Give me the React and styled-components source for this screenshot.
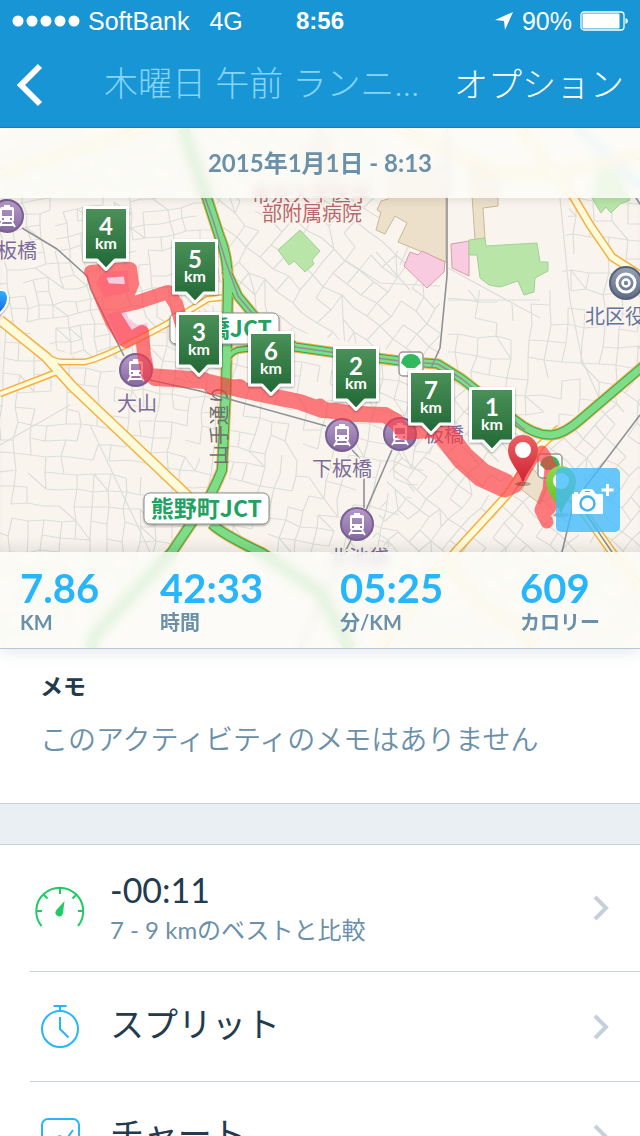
import React from 'react';
import styled, { createGlobalStyle } from 'styled-components';

const latin = "Lato, 'Noto Sans CJK JP', sans-serif";
const japanese = "'Noto Sans CJK JP', sans-serif";

const GlobalStyle = createGlobalStyle`
  * {
    box-sizing: border-box;
  }

  body {
    margin: 0;
    background: #fff;
    font-family: ${latin};
    color: #223b50;
  }

  button {
    margin: 0;
    padding: 0;
    border: 0;
    background: none;
    font: inherit;
    color: inherit;
    cursor: pointer;
  }
`;

const Screen = styled.div`
  height: 100vh;
  display: flex;
  flex-direction: column;
  overflow: hidden;
`;

const Header = styled.header`
  flex: none;
  background: #1895d4;
  color: #fff;
  border-bottom: 1px solid #1580b8;
`;

const StatusBar = styled.div`
  display: grid;
  grid-template-columns: 1fr auto 1fr;
  align-items: center;
  height: 42px;
  padding: 0 12px;
  font-family: 'Liberation Sans', sans-serif;
  font-size: 25px;
`;

const Clock = styled.strong`
  font-size: 24px;
`;

const StatusGroup = styled.div`
  display: flex;
  align-items: center;
  justify-content: ${({ $end }) => ($end ? 'flex-end' : 'flex-start')};
  gap: 8px;
`;

const Network = styled.span`
  margin-left: 12px;
`;

const NavBar = styled.nav`
  display: flex;
  align-items: center;
  height: 85px;
  padding: 0 16px;
  font-family: ${japanese};
  font-size: 34px;
  font-weight: 300;
  line-height: 48px;
`;

const BackButton = styled.button`
  display: flex;
  width: 88px;
`;

const Title = styled.h1`
  flex: 1;
  margin: 0 0 4px;
  overflow: hidden;
  white-space: nowrap;
  font-family: ${latin};
  font-size: 34px;
  font-weight: 300;
  color: #84d4fc;
`;

const OptionsButton = styled.button`
  margin-bottom: 4px;
  white-space: nowrap;
`;

const Content = styled.main`
  flex: 1;
  overflow-y: auto;
  scrollbar-width: none;
`;

const MapPanel = styled.section`
  position: relative;
  border-bottom: 1px solid #b9c8d8;
  box-shadow: 0 4px 14px rgba(60, 80, 100, 0.12);
`;

const MapDrawing = styled.svg`
  position: absolute;
  width: 100%;
  height: 100%;
  background: #f9f5ee;
  font-family: ${japanese};
`;

const MapOverlay = styled.div`
  position: relative;
  display: flex;
  flex-direction: column;
`;

const DateBar = styled.div`
  padding: 20px 0;
  background: rgba(253, 252, 249, 0.8);
  backdrop-filter: blur(5px);
  text-align: center;
  font-size: 24px;
  font-weight: 700;
  line-height: 30px;
  color: #6b90a9;
`;

const MapWindow = styled.div`
  display: flex;
  align-items: flex-end;
  justify-content: flex-end;
  height: 354px;
  padding: 20px;
  box-shadow: inset 0 8px 12px -8px rgba(0, 0, 0, 0.14), inset 0 -14px 14px -10px rgba(0, 0, 0, 0.1);
`;

const CameraButton = styled.button`
  display: flex;
  border-radius: 5px;
  background: rgba(66, 188, 253, 0.8);
`;

const Stats = styled.dl`
  display: grid;
  grid-template-columns: 7fr 9fr 9fr 6fr;
  margin: 0;
  padding: 14px 0 14px 20px;
  background: rgba(253, 252, 249, 0.8);
  backdrop-filter: blur(5px);
`;

const Stat = styled.div`
  display: flex;
  flex-direction: column-reverse;
`;

const StatValue = styled.dd`
  margin: 0;
  font-size: 40px;
  font-weight: 700;
  line-height: 44px;
  color: #27b5fb;
`;

const StatLabel = styled.dt`
  font-size: 20px;
  font-weight: 700;
  line-height: 24px;
  height: 24px;
  color: #6b90a9;
`;

const Memo = styled.section`
  padding: 20px 40px 46px;
`;

const MemoTitle = styled.h2`
  margin: 0 0 16px;
  font-size: 23px;
  font-weight: 700;
  line-height: 34px;
`;

const MemoText = styled.p`
  margin: 0;
  font-family: ${japanese};
  font-size: 28px;
  font-weight: 350;
  line-height: 38px;
  color: #6b90a9;
`;

const Divider = styled.div`
  height: 42px;
  border: solid #c6d0da;
  border-width: 1px 0;
  background: #eaeff3;
`;

const Menu = styled.ul`
  margin: 0;
  padding: 0 0 0 30px;
  list-style: none;
`;

const MenuItem = styled.li`
  border-bottom: 1px solid #c6d2dc;
`;

const MenuButton = styled.button`
  display: flex;
  align-items: center;
  width: 100%;
  min-height: ${({ $tall }) => ($tall ? '126px' : '109px')};
  padding-right: 30px;
  gap: 20px;
  text-align: left;
`;

const MenuText = styled.span`
  flex: 1;
  display: flex;
  flex-direction: column;
  padding-bottom: ${({ $single }) => ($single ? '6px' : '0')};
`;

const MenuTitle = styled.span`
  font-size: 34px;
  line-height: 44px;
`;

const MenuNote = styled.span`
  font-size: 24px;
  line-height: 36px;
  color: #6b90a9;
`;

// Streets: a jittered lattice per district, clipped to the district's outline
const districts = [
  { outline: '0,128 205,128 226,290 222,300 85,362 0,318', angle: -8, size: 13, seed: 3 },
  { outline: '0,318 60,370 215,515 222,300 85,362', angle: 6, size: 15, seed: 11 },
  { outline: '0,325 50,362 205,515 130,600 0,648', angle: 3, size: 16, seed: 7 },
  { outline: '205,128 378,128 380,230 440,300 440,360 262,325 228,270', angle: 38, size: 17, seed: 5 },
  { outline: '448,290 560,290 570,198 640,198 640,370 545,435 448,365', angle: 4, size: 18, seed: 9 },
  { outline: '228,350 400,362 440,430 350,648 230,540', angle: 12, size: 16, seed: 21 },
  { outline: '440,364 545,440 640,372 640,648 345,648 400,430', angle: 42, size: 15, seed: 15 },
];

const random = (seed) => {
  let value = seed * 7919;
  return () => {
    value = (value * 16807) % 2147483647;
    return value / 2147483647;
  };
};

const streetPath = ({ outline, angle, size, seed }) => {
  const next = random(seed);
  const points = outline.split(' ').map((pair) => pair.split(',').map(Number));
  const cx = points.reduce((sum, p) => sum + p[0], 0) / points.length;
  const cy = points.reduce((sum, p) => sum + p[1], 0) / points.length;
  const cos = Math.cos((angle * Math.PI) / 180);
  const sin = Math.sin((angle * Math.PI) / 180);
  const count = 17;
  const grid = [];
  for (let i = -count; i <= count; i += 1) {
    const row = [];
    for (let j = -count; j <= count; j += 1) {
      const x = i * size + (next() - 0.5) * size * 0.3;
      const y = j * size + (next() - 0.5) * size * 0.3;
      row.push([Math.round(cx + x * cos - y * sin), Math.round(cy + x * sin + y * cos)]);
    }
    grid.push(row);
  }
  let d = '';
  for (let i = 0; i < grid.length - 1; i += 1) {
    for (let j = 0; j < grid.length - 1; j += 1) {
      const from = grid[i][j];
      if (next() > 0.24) d += `M${from}L${grid[i + 1][j]}`;
      if (next() > 0.3) d += `M${from}L${grid[i][j + 1]}`;
      if (next() > 0.92) d += `M${from}L${grid[i + 1][j + 1]}`;
    }
  }
  return d;
};

const Streets = () => (
  <g fill="none" stroke="#dcded8" strokeWidth="1.2">
    {districts.map((district) => (
      <g key={district.seed}>
        <clipPath id={`district-${district.seed}`}>
          <polygon points={district.outline} />
        </clipPath>
        <path d={streetPath(district)} clipPath={`url(#district-${district.seed})`} />
      </g>
    ))}
    <path d="M448 268L540 318M560 198L570 300L582 360L600 400M400 265L418 225M345 260L380 283L440 286M448 300H540M90 425L150 552M0 445L70 405M376 252L410 290" />
  </g>
);

const roads = [
  { d: 'M0 173L150 128', width: 6 },
  { d: 'M395 128L500 173L560 173L640 155', width: 6 },
  { d: 'M520 128L574 198L590 225L612 257L640 275', width: 6 },
  { d: 'M0 394L57 372', width: 4 },
  { d: 'M40 351Q52 362 62 362L84 362Q100 360 165 325L208 299L228 297', width: 4 },
  { d: 'M0 320L46 357L72 386L190 498', width: 8 },
  { d: 'M380 648L455 552L508 494L540 446L560 428', width: 6 },
  { d: 'M453 552L455 572L480 606L520 625L535 648', width: 6 },
  { d: 'M548 466L582 510L612 552L640 588', width: 6 },
];

const highways = [
  { d: 'M183 128L207 198L219 235Q228 255 228 285L226 390L222 470Q218 480 211 494L172 552L95 635L90 648', width: 8 },
  { d: 'M226 270L238 296L262 325L295 347L330 352L400 361L438 364L462 379L515 420Q535 436 552 435Q564 434 580 420L648 362', width: 7 },
  { d: 'M226 362Q230 352 238 350L262 347', width: 4 },
  { d: 'M212 524Q222 534 262 553L320 592L350 648', width: 8 },
];

const Roads = () => (
  <g fill="none" strokeLinejoin="round">
    {roads.map(({ d, width }) => (
      <path key={d} d={d} stroke="#f6b03f" strokeWidth={width + 3} />
    ))}
    {roads.map(({ d, width }) => (
      <path key={d} d={d} stroke="#fefbdc" strokeWidth={width} />
    ))}
    {highways.map(({ d, width }) => (
      <g key={d}>
        <path d={d} stroke="#f3ae45" strokeWidth={width + 4} />
        <path d={d} stroke="#35a65a" strokeWidth={width + 2} />
      </g>
    ))}
    {highways.map(({ d, width }) => (
      <path key={d} d={d} stroke="#80dd87" strokeWidth={width} />
    ))}
    <g stroke="#8f9199" strokeWidth="1.6">
      <path d="M188 150L213 220L226 262L238 296L262 325L295 347L330 352L400 361L438 364L462 379L525 430" />
      <path d="M22 228L57 249L87 276L91 290L124 356M150 380L200 391L326 426M352 450Q364 460 364 475L364 508M392 450L366 510L345 552L300 648" />
      <path d="M447 128V276L440 348L431 368M640 415L574 502L562 552M578 502L612 552M636 198L640 204" />
    </g>
  </g>
);

const Areas = () => (
  <g>
    <g fill="#ece0ca" stroke="#cdb893">
      <path d="M376 230L381 212L377 210L381 201L388 199L388 165H446V262L420 251L398 242L407 223L395 216L385 234Z" />
      <path d="M470 165L475 240L485 238L483 208L498 206V175Z" />
      <path d="M320 128L345 170L325 190L300 160Z" />
      <path d="M532 468L548 485L540 504L522 490Z" />
    </g>
    <g fill="#f9cbe0" stroke="#de9aa8">
      <path d="M404 266L410 252L418 255L422 251L445 262L444 272L427 288Z" />
      <path d="M451 244L469 241V276L452 268Z" />
    </g>
    <g fill="#f9cbe0">
      <path d="M96 282L104 272L128 270L129 291L104 298Z" />
      <path d="M106 314L126 310L129 320L138 325L147 323L149 334L126 346L118 340Z" />
    </g>
    <g fill="#b9e6a8" stroke="#a2cf97">
      <path d="M300 230L320 251L312 260L314 264L305 272L294 261L289 265L278 250Z" />
      <path d="M469 240L485 238L486 246L537 243L540 262L548 262V271L535 278L534 292L524 295L518 281L500 287L489 285L480 278L477 255H469Z" />
      <path d="M592 198L601 213L606 207L611 213L620 204L630 200L618 172L600 165Z" />
    </g>
    <path d="M577 128L640 185" fill="none" stroke="#a8dcf0" strokeWidth="7" />
  </g>
);

const Station = ({ x, y }) => (
  <g transform={`translate(${x} ${y})`}>
    <circle r="16" fill="url(#station)" stroke="#776093" strokeWidth="2" />
    <path
      fill="#fff"
      fillRule="evenodd"
      d="M-3 -11H3V-9H5Q7 -9 7 -7V4Q7 6 5 6H-5Q-7 6 -7 4V-7Q-7 -9 -5 -9H-3ZM-5 -6V0H5V-6ZM-5 2V4H-3V2ZM3 2V4H5V2Z"
    />
    <path d="M-5 6L-8 11M5 6L8 11M-6 9H6" stroke="#fff" strokeWidth="1.8" />
  </g>
);

const Exit = ({ x, y }) => (
  <g transform={`translate(${x} ${y})`}>
    <rect x="-12" y="-12" width="24" height="24" rx="4" fill="#fff" stroke="#9a9a94" strokeWidth="1.5" />
    <path d="M-10 -1Q-8 -10 0 -10Q8 -10 10 -1L4 4H-4Z" fill="#2fb95c" />
    <path d="M-4 4H4V10H-4Z" fill="#f3f3ee" />
  </g>
);

const Route = () => (
  <g fill="none" stroke="#ff3a41" strokeLinecap="round" strokeLinejoin="round" opacity="0.66">
    <path strokeWidth="14" d="M91 272L102 271L130 269L132 284L127 296L106 303M112 308L135 303L168 292L176 304L183 328" />
    <path strokeWidth="19" d="M96 276L105 300L114 320L125 337" />
    <path strokeWidth="14" d="M100 290L122 291M126 341L142 332L144 355L148 375L204 379L212 388L240 386" />
    <path strokeWidth="16" d="M155 378L205 381L238 389L270 396L300 402L322 410L335 411L355 414L385 415L397 422L403 432L430 430L445 433" />
    <path strokeWidth="13" d="M320 405L328 411" />
    <path strokeWidth="24" d="M446 436L463 458L482 475L504 485" />
    <path strokeWidth="13" d="M505 491L516 486L532 458L542 452L551 468L549 490L541 510L547 522M549 490L556 499L548 510" />
  </g>
);

const kilometres = [
  { km: 4, x: 106, y: 206 },
  { km: 5, x: 195, y: 239 },
  { km: 3, x: 199, y: 312 },
  { km: 6, x: 271, y: 331 },
  { km: 2, x: 356, y: 346 },
  { km: 7, x: 431, y: 370 },
  { km: 1, x: 492, y: 387 },
];

const KmMarker = ({ km, x, y }) => (
  <g transform={`translate(${x} ${y})`} fontFamily="Lato, sans-serif" fontWeight="700" textAnchor="middle">
    <path
      d="M-21.5 1.5H21.5V54H9L0 63.5L-9 54H-21.5Z"
      fill="url(#marker)"
      stroke="#fff"
      strokeWidth="3"
      strokeLinejoin="round"
      filter="url(#shadow)"
    />
    <text y="29" fontSize="24" fill="#fff">{km}</text>
    <text y="43" fontSize="16" fill="#fff">km</text>
  </g>
);

const Pin = ({ x, y, fill }) => (
  <g transform={`translate(${x} ${y})`}>
    <ellipse cy="34" rx="8" ry="2" fill="#000" opacity="0.25" />
    <path d="M0 33C-4 20 -15 12 -15 0A15 15 0 0 1 15 0C15 12 4 20 0 33Z" fill={fill} />
    <circle r="8" fill="#fff" />
  </g>
);

const Plate = ({ x, y, width, children }) => (
  <g transform={`translate(${x} ${y})`}>
    <rect width={width} height="31" rx="6" fill="#fff" stroke="#8d8d88" filter="url(#shadow)" />
    <text x={width - 7} y="24" fontSize="23" fontWeight="700" fill="#22a163" textAnchor="end">
      {children}
    </text>
  </g>
);

const RunMap = () => (
  <MapDrawing viewBox="0 128 640 520" preserveAspectRatio="xMidYMid slice" role="img" aria-label="ランニングマップ">
    <defs>
      <linearGradient id="marker" x2="0" y2="1">
        <stop offset="0" stopColor="#4b9159" />
        <stop offset="1" stopColor="#216735" />
      </linearGradient>
      <linearGradient id="station" x2="0" y2="1">
        <stop offset="0" stopColor="#b79bc9" />
        <stop offset="1" stopColor="#85699f" />
      </linearGradient>
      <linearGradient id="office" x2="0" y2="1">
        <stop offset="0" stopColor="#97a1b5" />
        <stop offset="1" stopColor="#5f6b87" />
      </linearGradient>
      <linearGradient id="red-pin" x2="0" y2="1">
        <stop offset="0" stopColor="#ec6064" />
        <stop offset="1" stopColor="#cf2330" />
      </linearGradient>
      <linearGradient id="green-pin" x2="0" y2="1">
        <stop offset="0" stopColor="#8fd850" />
        <stop offset="1" stopColor="#5fbb1e" />
      </linearGradient>
      <linearGradient id="shield" x2="0" y2="1">
        <stop offset="0" stopColor="#36b5ff" />
        <stop offset="1" stopColor="#1054d8" />
      </linearGradient>
      <filter id="shadow" x="-20%" y="-20%" width="140%" height="150%">
        <feDropShadow dx="0" dy="1" stdDeviation="1" floodOpacity="0.4" />
      </filter>
    </defs>

    <Streets />
    <Areas />
    <Roads />

    <path d="M-10 290H2Q8 290 8 299Q7 310 -8 319Z" fill="url(#shield)" stroke="#fff" strokeWidth="2" filter="url(#shadow)" />
    <Station x={7} y={216} />
    <Station x={136} y={370} />
    <Station x={342} y={435} />
    <Station x={400} y={434} />
    <Station x={357} y={524} />
    <Exit x={411} y={364} />
    <Exit x={550} y={466} />
    <g transform="translate(626 283)" fill="none" stroke="#fff">
      <circle r="16" fill="url(#office)" stroke="#566179" strokeWidth="2" />
      <circle r="9" strokeWidth="3" />
      <circle r="3.5" strokeWidth="2.5" />
    </g>

    <g
      fontSize="20"
      fill="#7c6c98"
      stroke="#f9f5ee"
      strokeWidth="3"
      paintOrder="stroke"
      textAnchor="middle"
    >
      <text x="17" y="258">板橋</text>
      <text x="137" y="411">大山</text>
      <text x="342" y="476">下板橋</text>
      <text x="444" y="442">板橋</text>
      <text x="359" y="565">北池袋</text>
      <text x="585" y="324" textAnchor="start" fill="#63739e">北区役所</text>
      <text x="311" y="202" fill="#b8686c">帝京大学医学</text>
      <text x="312" y="221" fill="#b8686c">部附属病院</text>
      <text transform="translate(227 425) rotate(-90)" fill="#70706e" stroke="none">山手通り</text>
    </g>

    <Plate x={170} y={313} width={109}>板橋JCT</Plate>
    <Plate x={144} y={493} width={125}>熊野町JCT</Plate>
    <Route />
    {kilometres.map((marker) => (
      <KmMarker key={marker.km} {...marker} />
    ))}
    <Pin x={523} y={450} fill="url(#red-pin)" />
    <Pin x={561} y={481} fill="url(#green-pin)" />
  </MapDrawing>
);

const SignalDots = () => (
  <svg width="68" height="12" fill="#fff" aria-hidden="true">
    {[6, 20, 34, 48, 62].map((cx) => (
      <circle key={cx} cx={cx} cy="6" r="5.5" />
    ))}
  </svg>
);

const LocationArrow = () => (
  <svg width="20" height="20" viewBox="0 0 20 20" fill="#fff" aria-hidden="true">
    <path d="M19 1L11 19L10 10L1 9Z" />
  </svg>
);

const Battery = () => (
  <svg width="48" height="20" viewBox="0 0 48 20" fill="#fff" aria-hidden="true">
    <rect x="1" y="1" width="43" height="18" rx="3" fill="none" stroke="#fff" strokeWidth="1.3" />
    <rect x="2.5" y="2.5" width="37" height="15" rx="1" />
    <path d="M45.5 7Q48 8 48 10Q48 12 45.5 13Z" />
  </svg>
);

const CameraIcon = () => (
  <svg width="64" height="64" viewBox="0 0 64 64" aria-hidden="true">
    <path
      d="M17 26H23L26 22Q27 21 28 21H35Q36 21 37 22L40 26H46Q47 26 47 27V45Q47 46 46 46H17Q16 46 16 45V27Q16 26 17 26Z"
      fill="#fff"
    />
    <path d="M18 25H22" stroke="#fff" strokeWidth="2" />
    <path d="M29 23.5H34" stroke="#45b4ec" />
    <circle cx="31.5" cy="35.5" r="7" fill="#fff" stroke="#45b4ec" strokeWidth="2.5" />
    <path d="M51.5 16V28M45.5 22H57.5" stroke="#fff" strokeWidth="3" />
  </svg>
);

const GaugeIcon = () => (
  <svg width="60" height="60" viewBox="0 0 60 60" fill="none" stroke="#20cb67" strokeWidth="2" aria-hidden="true">
    <path d="M11.5 48A23.5 23.5 0 1 1 48 48" />
    <path d="M6 33H12M48 33H54M30 9.5V16M13.5 16.5L17.5 20.5M46.5 16.5L42.5 20.5" />
    <path d="M34.500 23L33 35Q32 39 29 38.500Q24 37 26 32.500Z" fill="#20cb67" stroke="none" />
  </svg>
);

const StopwatchIcon = () => (
  <svg width="60" height="60" viewBox="0 0 60 60" fill="none" stroke="#27b5fb" strokeWidth="2" aria-hidden="true">
    <circle cx="30" cy="32" r="18" />
    <path d="M23.5 9H36.5M30 9V14M30 20V32L38.5 40.5" />
  </svg>
);

const ChartIcon = () => (
  <svg width="60" height="60" viewBox="0 0 60 60" fill="none" stroke="#27b5fb" strokeWidth="2" aria-hidden="true">
    <rect x="12" y="12" width="37" height="37" rx="6" />
    <path d="M18 36L24 31L30 29L34 32L38 30L43 23" />
  </svg>
);

const Chevron = () => (
  <svg width="18" height="26" viewBox="0 0 18 26" fill="none" stroke="#c4d0dc" strokeWidth="4" aria-hidden="true">
    <path d="M3 2L14 13L3 24" />
  </svg>
);

const stats = [
  { value: '7.86', label: 'KM' },
  { value: '42:33', label: '時間' },
  { value: '05:25', label: '分/KM' },
  { value: '609', label: 'カロリー' },
];

const menu = [
  { title: '-00:11', note: '7 - 9 kmのベストと比較', Icon: GaugeIcon },
  { title: 'スプリット', Icon: StopwatchIcon },
  { title: 'チャート', Icon: ChartIcon },
];

const App = () => (
  <Screen>
    <GlobalStyle />
    <Header>
      <StatusBar>
        <StatusGroup>
          <SignalDots />
          <span>SoftBank</span>
          <Network>4G</Network>
        </StatusGroup>
        <Clock>8:56</Clock>
        <StatusGroup $end>
          <LocationArrow />
          <span>90%</span>
          <Battery />
        </StatusGroup>
      </StatusBar>
      <NavBar>
        <BackButton aria-label="戻る">
          <svg width="28" height="44" viewBox="0 0 28 44" fill="none" stroke="#fff" strokeWidth="6">
            <path d="M24 3L5 22L24 41" />
          </svg>
        </BackButton>
        <Title>木曜日 午前 ランニ…</Title>
        <OptionsButton>オプション</OptionsButton>
      </NavBar>
    </Header>

    <Content>
      <MapPanel>
        <RunMap />
        <MapOverlay>
          <DateBar>2015年1月1日 - 8:13</DateBar>
          <MapWindow>
            <CameraButton aria-label="写真を追加">
              <CameraIcon />
            </CameraButton>
          </MapWindow>
          <Stats>
            {stats.map(({ value, label }) => (
              <Stat key={label}>
                <StatLabel>{label}</StatLabel>
                <StatValue>{value}</StatValue>
              </Stat>
            ))}
          </Stats>
        </MapOverlay>
      </MapPanel>

      <Memo>
        <MemoTitle>メモ</MemoTitle>
        <MemoText>このアクティビティのメモはありません</MemoText>
      </Memo>
      <Divider />

      <Menu>
        {menu.map(({ title, note, Icon }) => (
          <MenuItem key={title}>
            <MenuButton $tall={Boolean(note)}>
              <Icon />
              <MenuText $single={!note}>
                <MenuTitle>{title}</MenuTitle>
                {note && <MenuNote>{note}</MenuNote>}
              </MenuText>
              <Chevron />
            </MenuButton>
          </MenuItem>
        ))}
      </Menu>
    </Content>
  </Screen>
);

export default App;
